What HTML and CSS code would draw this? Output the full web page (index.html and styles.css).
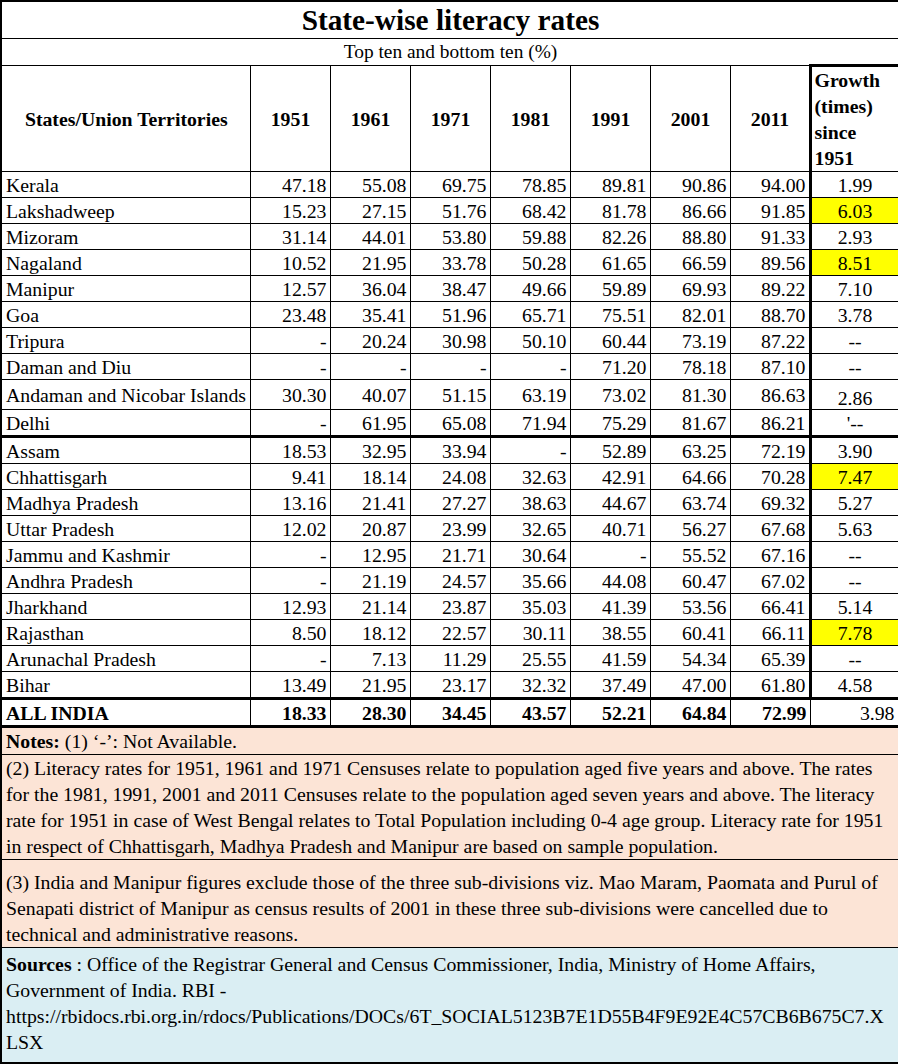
FILE: index.html
```html
<!DOCTYPE html>
<html>
<head>
<meta charset="utf-8">
<link rel="stylesheet" href="styles.css">
</head>
<body>
<table class="lit">
<colgroup>
<col class="c-name"><col class="c-yr"><col class="c-yr"><col class="c-yr"><col class="c-yr"><col class="c-yr"><col class="c-yr"><col class="c-yr"><col class="c-gr">
</colgroup>
<tr class="r-title"><td colspan="9" class="title">State-wise literacy rates</td></tr>
<tr class="r-sub"><td colspan="9" class="sub">Top ten and bottom ten (%)</td></tr>
<tr class="r-head">
<th class="hname">States/Union Territories</th><th>1951</th><th>1961</th><th>1971</th><th>1981</th><th>1991</th><th>2001</th><th class="pre-gr">2011</th><th class="gr ghead">Growth<br>(times)<br>since<br>1951</th>
</tr>
<tr><td class="nm">Kerala</td><td>47.18</td><td>55.08</td><td>69.75</td><td>78.85</td><td>89.81</td><td>90.86</td><td class="pre-gr">94.00</td><td class="gr">1.99</td></tr>
<tr><td class="nm">Lakshadweep</td><td>15.23</td><td>27.15</td><td>51.76</td><td>68.42</td><td>81.78</td><td>86.66</td><td class="pre-gr">91.85</td><td class="gr hl">6.03</td></tr>
<tr><td class="nm">Mizoram</td><td>31.14</td><td>44.01</td><td>53.80</td><td>59.88</td><td>82.26</td><td>88.80</td><td class="pre-gr">91.33</td><td class="gr">2.93</td></tr>
<tr><td class="nm">Nagaland</td><td>10.52</td><td>21.95</td><td>33.78</td><td>50.28</td><td>61.65</td><td>66.59</td><td class="pre-gr">89.56</td><td class="gr hl">8.51</td></tr>
<tr><td class="nm">Manipur</td><td>12.57</td><td>36.04</td><td>38.47</td><td>49.66</td><td>59.89</td><td>69.93</td><td class="pre-gr">89.22</td><td class="gr">7.10</td></tr>
<tr><td class="nm">Goa</td><td>23.48</td><td>35.41</td><td>51.96</td><td>65.71</td><td>75.51</td><td>82.01</td><td class="pre-gr">88.70</td><td class="gr">3.78</td></tr>
<tr><td class="nm">Tripura</td><td>-</td><td>20.24</td><td>30.98</td><td>50.10</td><td>60.44</td><td>73.19</td><td class="pre-gr">87.22</td><td class="gr">--</td></tr>
<tr><td class="nm">Daman and Diu</td><td>-</td><td>-</td><td>-</td><td>-</td><td>71.20</td><td>78.18</td><td class="pre-gr">87.10</td><td class="gr">--</td></tr>
<tr class="r-tall"><td class="nm">Andaman and Nicobar Islands</td><td>30.30</td><td>40.07</td><td>51.15</td><td>63.19</td><td>73.02</td><td>81.30</td><td class="pre-gr">86.63</td><td class="gr low">2.86</td></tr>
<tr class="r-sep"><td class="nm">Delhi</td><td>-</td><td>61.95</td><td>65.08</td><td>71.94</td><td>75.29</td><td>81.67</td><td class="pre-gr">86.21</td><td class="gr">'--</td></tr>
<tr><td class="nm">Assam</td><td>18.53</td><td>32.95</td><td>33.94</td><td>-</td><td>52.89</td><td>63.25</td><td class="pre-gr">72.19</td><td class="gr">3.90</td></tr>
<tr><td class="nm">Chhattisgarh</td><td>9.41</td><td>18.14</td><td>24.08</td><td>32.63</td><td>42.91</td><td>64.66</td><td class="pre-gr">70.28</td><td class="gr hl">7.47</td></tr>
<tr><td class="nm">Madhya Pradesh</td><td>13.16</td><td>21.41</td><td>27.27</td><td>38.63</td><td>44.67</td><td>63.74</td><td class="pre-gr">69.32</td><td class="gr">5.27</td></tr>
<tr><td class="nm">Uttar Pradesh</td><td>12.02</td><td>20.87</td><td>23.99</td><td>32.65</td><td>40.71</td><td>56.27</td><td class="pre-gr">67.68</td><td class="gr">5.63</td></tr>
<tr><td class="nm">Jammu and Kashmir</td><td>-</td><td>12.95</td><td>21.71</td><td>30.64</td><td>-</td><td>55.52</td><td class="pre-gr">67.16</td><td class="gr">--</td></tr>
<tr><td class="nm">Andhra Pradesh</td><td>-</td><td>21.19</td><td>24.57</td><td>35.66</td><td>44.08</td><td>60.47</td><td class="pre-gr">67.02</td><td class="gr">--</td></tr>
<tr><td class="nm">Jharkhand</td><td>12.93</td><td>21.14</td><td>23.87</td><td>35.03</td><td>41.39</td><td>53.56</td><td class="pre-gr">66.41</td><td class="gr">5.14</td></tr>
<tr><td class="nm">Rajasthan</td><td>8.50</td><td>18.12</td><td>22.57</td><td>30.11</td><td>38.55</td><td>60.41</td><td class="pre-gr">66.11</td><td class="gr hl">7.78</td></tr>
<tr><td class="nm">Arunachal Pradesh</td><td>-</td><td>7.13</td><td>11.29</td><td>25.55</td><td>41.59</td><td>54.34</td><td class="pre-gr">65.39</td><td class="gr">--</td></tr>
<tr class="r-sep"><td class="nm">Bihar</td><td>13.49</td><td>21.95</td><td>23.17</td><td>32.32</td><td>37.49</td><td>47.00</td><td class="pre-gr">61.80</td><td class="gr">4.58</td></tr>
<tr class="r-sep r-total"><td class="nm">ALL INDIA</td><td>18.33</td><td>28.30</td><td>34.45</td><td>43.57</td><td>52.21</td><td>64.84</td><td>72.99</td><td class="tot-gr">3.98</td></tr>
<tr class="r-note1"><td colspan="9" class="note"><b>Notes:</b> (1) ‘-’: Not Available.</td></tr>
<tr class="r-note2"><td colspan="9" class="note">(2) Literacy rates for 1951, 1961 and 1971 Censuses relate to population aged five years and above. The rates<br>for the 1981, 1991, 2001 and 2011 Censuses relate to the population aged seven years and above. The literacy<br>rate for 1951 in case of West Bengal relates to Total Population including 0-4 age group. Literacy rate for 1951<br>in respect of Chhattisgarh, Madhya Pradesh and Manipur are based on sample population.</td></tr>
<tr class="r-note3"><td colspan="9" class="note">(3) India and Manipur figures exclude those of the three sub-divisions viz. Mao Maram, Paomata and Purul of<br>Senapati district of Manipur as census results of 2001 in these three sub-divisions were cancelled due to<br>technical and administrative reasons.</td></tr>
<tr class="r-src"><td colspan="9" class="src"><b>Sources</b> : Office of the Registrar General and Census Commissioner, India, Ministry of Home Affairs,<br>Government of India. RBI -<br>https://rbidocs.rbi.org.in/rdocs/Publications/DOCs/6T_SOCIAL5123B7E1D55B4F9E92E4C57CB6B675C7.X<br>LSX</td></tr>
</table>
</body>
</html>
```

FILE: styles.css
```css
html, body {
  margin: 0;
  padding: 0;
  background: #ffffff;
}

.lit {
  width: 898px;
  table-layout: fixed;
  border-collapse: collapse;
  font-family: "Liberation Serif", "Times New Roman", serif;
  font-size: 19.8px;
  color: #000;
  border: 2px solid #000;
}

.c-name { width: 249px; }
.c-yr { width: 80px; }
.c-gr { width: 89px; }

.lit td, .lit th {
  border: 1px solid #000;
  padding: 0 3px 0 4px;
  height: 25px;
  line-height: 22px;
  text-align: right;
  vertical-align: middle;
  white-space: nowrap;
  overflow: hidden;
}

.lit .r-title td { height: 36px; }
.lit td.title {
  text-align: center;
  font-size: 29.3px;
  font-weight: bold;
  line-height: 32px;
}
.lit .r-sub td { height: 25px; }
.lit td.sub {
  text-align: center;
  font-size: 19.4px;
}

.lit .r-head th {
  height: 102px;
  font-weight: bold;
  text-align: center;
}
.lit .r-head th.ghead {
  text-align: left;
  line-height: 26px;
  border-top: 3px solid #000;
  border-right: 3px solid #000;
  padding-left: 3px;
}

.lit td.nm {
  text-align: left;
}

.lit .pre-gr { border-right: 3px solid #000; }
.lit td.gr {
  text-align: center;
  border-right: 3px solid #000;
}
.lit td.hl { background: #ffff00; }
.lit td.low { vertical-align: bottom; }

.lit .r-tall td { height: 29px; }

.lit .r-sep td { border-bottom: 3px solid #000; }

.lit .r-total td { font-weight: bold; }
.lit .r-total td.tot-gr {
  font-weight: normal;
  text-align: right;
  border-right: 3px solid #000;
}

.lit td.note {
  text-align: left;
  background: #fce4d6;
  line-height: 26px;
  vertical-align: bottom;
  padding-left: 4px;
}
.lit .r-note1 td { height: 25px; }
.lit .r-note2 td { height: 103px; }
.lit .r-note3 td { height: 87px; }

.lit td.src {
  text-align: left;
  background: #daeef3;
  line-height: 26px;
  vertical-align: bottom;
  padding-bottom: 7px;
}
.lit .r-src td { height: 107px; }
```
